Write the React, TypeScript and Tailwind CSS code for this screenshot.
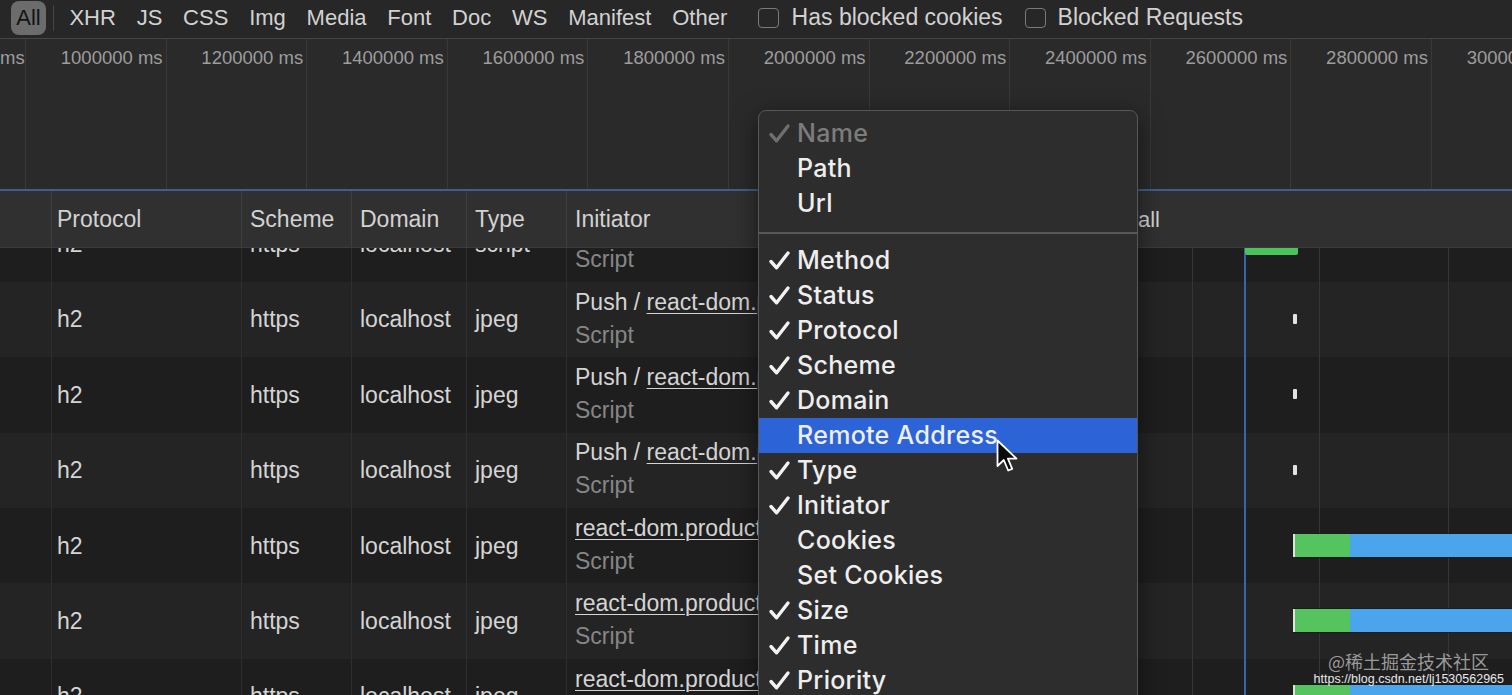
import React from "react";

const filters = ["XHR", "JS", "CSS", "Img", "Media", "Font", "Doc", "WS", "Manifest", "Other"];
const ticks = [
  "1000000 ms",
  "1200000 ms",
  "1400000 ms",
  "1600000 ms",
  "1800000 ms",
  "2000000 ms",
  "2200000 ms",
  "2400000 ms",
  "2600000 ms",
  "2800000 ms",
  "3000000 ms",
];

type Row = { type: string; push: boolean; bar: "top" | "tick" | "long" };

const rows: Row[] = [
  { type: "script", push: true, bar: "top" },
  { type: "jpeg", push: true, bar: "tick" },
  { type: "jpeg", push: true, bar: "tick" },
  { type: "jpeg", push: true, bar: "tick" },
  { type: "jpeg", push: false, bar: "long" },
  { type: "jpeg", push: false, bar: "long" },
  { type: "jpeg", push: false, bar: "long" },
];

const menuItems: { label: string; checked: boolean; active?: boolean }[] = [
  { label: "Method", checked: true },
  { label: "Status", checked: true },
  { label: "Protocol", checked: true },
  { label: "Scheme", checked: true },
  { label: "Domain", checked: true },
  { label: "Remote Address", checked: false, active: true },
  { label: "Type", checked: true },
  { label: "Initiator", checked: true },
  { label: "Cookies", checked: false },
  { label: "Set Cookies", checked: false },
  { label: "Size", checked: true },
  { label: "Time", checked: true },
  { label: "Priority", checked: true },
];

function Check({ color }: { color: string }) {
  return (
    <svg width="23" height="21" viewBox="0 0 23 21" fill="none">
      <path
        d="M3 11.5 L8.6 17.8 L20 3"
        stroke={color}
        strokeWidth="3.4"
        strokeLinecap="round"
        strokeLinejoin="round"
      />
    </svg>
  );
}

function Toolbar() {
  return (
    <div className="flex h-[39px] shrink-0 items-center border-b border-[#454545] bg-[#272727] pb-[3px] pl-[11px] text-[22px] text-[#d2d2d2]">
      <div className="flex h-[34px] w-[35px] items-center justify-center rounded-[8px] bg-[#6c6c6c] text-[#141414]">
        All
      </div>
      <div className="ml-[7px] mr-[5px] h-[26px] w-px bg-[#444]" />
      {filters.map((f) => (
        <span key={f} className="px-[10.4px] leading-none">
          {f}
        </span>
      ))}
      <div className="ml-[20px] h-[20px] w-[21px] rounded-[4px] border border-[#7a7a7a]" />
      <span className="ml-[13px] text-[23px] leading-none">Has blocked cookies</span>
      <div className="ml-[22px] h-[20px] w-[21px] rounded-[4px] border border-[#7a7a7a]" />
      <span className="ml-[12px] text-[23px] leading-none">Blocked Requests</span>
    </div>
  );
}

function Overview() {
  return (
    <div className="flex h-[150px] shrink-0 overflow-hidden bg-[#2a2a2a] text-[18.5px] leading-[22px] text-[#9d9d9d]">
      <div className="w-[25px] shrink-0 overflow-hidden pt-[8px] text-right">
        <span className="whitespace-nowrap pr-[5px]">ms</span>
      </div>
      {ticks.map((t) => (
        <div
          key={t}
          className="w-[140.6px] shrink-0 whitespace-nowrap border-l border-[#383838] pr-[3px] pt-[8px] text-right"
        >
          {t}
        </div>
      ))}
    </div>
  );
}

function Waterfall({ bar }: { bar: Row["bar"] }) {
  return (
    <div className="relative w-[447px] shrink-0 border-l border-[#2c2c2c]">
      <div className="absolute inset-y-0 left-[126px] w-px bg-[#363636]" />
      <div className="absolute inset-y-0 left-[253px] w-px bg-[#363636]" />
      <div className="absolute inset-y-0 left-[382px] w-px bg-[#363636]" />
      <div className="absolute inset-y-0 left-[178px] w-[2px] bg-[#3a64a8]" />
      {bar === "top" && (
        <div className="absolute left-[179px] top-[26px] h-[22px] w-[53px] rounded-[2px] bg-[#4cc25a]" />
      )}
      {bar === "tick" && (
        <div className="absolute left-[227px] top-[32px] h-[10px] w-[4px] rounded-[1px] bg-[#e2e2e2]" />
      )}
      {bar === "long" && (
        <div className="absolute left-[227px] right-0 top-[25px] flex h-[25px] border-y border-[#1b1b1b]">
          <div className="w-[2px] bg-[#e2e2e2]" />
          <div className="w-[55px] bg-[#55c45f]" />
          <div className="flex-1 bg-[#4aa5ec]" />
        </div>
      )}
    </div>
  );
}

function Table() {
  const cell = "shrink-0 flex items-center border-l border-[#2e2e2e] pl-[8px]";
  const head = "flex shrink-0 items-center border-l border-[#3e3e3e] pl-[8px]";
  return (
    <div className="flex min-h-0 flex-1 flex-col">
      <div className="flex h-[57px] shrink-0 border-b border-[#3b3b3b] bg-[#303030] text-[23px] text-[#d2d2d2]">
        <div className="w-[51px] shrink-0" />
        <div className={`${head} w-[190px] !pl-[5px]`}>Protocol</div>
        <div className={`${head} w-[110px]`}>Scheme</div>
        <div className={`${head} w-[115px]`}>Domain</div>
        <div className={`${head} w-[100px]`}>Type</div>
        <div className={`${head} w-[264px]`}>Initiator</div>
        <div className={`${head} w-[235px]`}>Size</div>
        <div className={`${head} w-[447px] text-[22px]`}>Waterfall</div>
      </div>
      <div className="min-h-0 flex-1 overflow-hidden">
        <div className="-mt-[41.5px]">
          {rows.map((r, i) => (
            <div
              key={i}
              className={`flex h-[75.4px] text-[23px] text-[#d4d4d4] ${i % 2 === 1 ? "bg-[#242424]" : "bg-[#1e1e1e]"}`}
            >
              <div className="w-[51px] shrink-0" />
              <div className="flex w-[190px] shrink-0 items-center border-l border-[#2e2e2e] pl-[5px]">h2</div>
              <div className={`${cell} w-[110px]`}>https</div>
              <div className={`${cell} w-[115px]`}>localhost</div>
              <div className={`${cell} w-[100px]`}>{r.type}</div>
              <div className="flex w-[264px] shrink-0 flex-col justify-center overflow-hidden whitespace-nowrap border-l border-[#2e2e2e] pb-[2px] pl-[8px] leading-[33px]">
                <span>
                  {r.push && "Push / "}
                  <span className="underline decoration-1 underline-offset-[3px]">react-dom.production.min.js</span>
                </span>
                <span className="text-[#868686]">Script</span>
              </div>
              <div className="w-[235px] shrink-0 border-l border-[#2e2e2e]" />
              <Waterfall bar={r.bar} />
            </div>
          ))}
        </div>
      </div>
    </div>
  );
}

function ColumnMenu() {
  return (
    <div className="absolute left-[758px] top-[110px] h-[600px] w-[380px] rounded-t-[8px] border border-[#575757] bg-[#2d2d2d] pt-[5px] font-['Inter',sans-serif] text-[25px] font-medium tracking-[0.3px] text-[#eeeeee] shadow-[0_6px_24px_rgba(0,0,0,0.5)]">
      <div className="flex h-[35px] items-center text-[#7c7c7c]">
        <div className="w-[38px] shrink-0 pl-[9px]">
          <Check color="#6f6f6f" />
        </div>
        Name
      </div>
      <div className="flex h-[35px] items-center pl-[38px]">Path</div>
      <div className="flex h-[35px] items-center pl-[38px]">Url</div>
      <div className="flex h-[22px] items-center pt-[2px]">
        <div className="h-[2px] w-full bg-[#585858]" />
      </div>
      {menuItems.map((m) => (
        <div key={m.label} className={`flex h-[35px] items-center ${m.active ? "bg-[#2c63d6]" : ""}`}>
          <div className="w-[38px] shrink-0 pl-[9px]">{m.checked && <Check color="#f2f2f2" />}</div>
          {m.label}
        </div>
      ))}
    </div>
  );
}

function Cursor() {
  return (
    <svg className="absolute left-[996px] top-[439px]" width="24" height="36" viewBox="0 0 24 36">
      <path
        d="M1.5 1.5 L1.5 27 L7.8 21 L12.2 31.5 L16.2 29.8 L11.9 19.6 L20.5 19.6 Z"
        fill="#0a0a0a"
        stroke="#ffffff"
        strokeWidth="1.8"
        strokeLinejoin="round"
      />
    </svg>
  );
}

function Watermark() {
  return (
    <div className="pointer-events-none absolute bottom-[8px] right-[8px] flex flex-col items-end">
      <span className="mr-[15px] font-['Noto_Sans_CJK_SC',sans-serif] text-[18px] leading-[22px] text-[#9a9a9a]">
        @稀土掘金技术社区
      </span>
      <span className="text-[12.5px] leading-[15px] text-[#e8e8e8]">https://blog.csdn.net/lj1530562965</span>
    </div>
  );
}

export default function App() {
  return (
    <div className="relative flex h-[695px] w-[1512px] flex-col overflow-hidden bg-[#1e1e1e] font-['Liberation_Sans',Arial,sans-serif]">
      <Toolbar />
      <Overview />
      <div className="h-[2px] shrink-0 bg-[#3c5f8f]" />
      <Table />
      <ColumnMenu />
      <Cursor />
      <Watermark />
    </div>
  );
}
